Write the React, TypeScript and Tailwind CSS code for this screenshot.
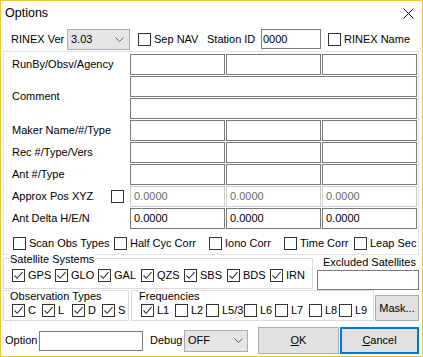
import React from "react";

const font = { fontFamily: '"Liberation Sans", Arial, sans-serif' };

function Check({ label, checked = false, className = "" }: { label: string; checked?: boolean; className?: string }) {
  return (
    <div className={`flex items-center h-[13px] shrink-0 ${className}`}>
      <div className="w-[13px] h-[13px] border border-[#333333] bg-white shrink-0 flex items-center justify-center">
        {checked && (
          <svg width="11" height="11" viewBox="0 0 11 11">
            <path d="M1.5 5.5 L4.2 8.3 L9.5 2.2" fill="none" stroke="#333333" strokeWidth="1.1" />
          </svg>
        )}
      </div>
      {label && <span className="ml-[3px] text-[11px] leading-[13px] whitespace-nowrap">{label}</span>}
    </div>
  );
}

function Box({ w, value = "", disabled = false }: { w: string; value?: string; disabled?: boolean }) {
  return (
    <div
      className={`${w} h-[21px] shrink-0 border bg-white flex items-center pl-[3px] text-[11px] ${
        disabled ? "border-[#cccccc] text-[#6d6d6d]" : "border-[#7a7a7a] text-black"
      }`}
    >
      {value}
    </div>
  );
}

function Chevron() {
  return (
    <svg width="9" height="5" viewBox="0 0 9 5">
      <path d="M0.5 0.5 L4.5 4.5 L8.5 0.5" fill="none" stroke="#606060" strokeWidth="1" />
    </svg>
  );
}

function Row({ label, children }: { label: React.ReactNode; children: React.ReactNode }) {
  return (
    <div className="flex h-[21px]">
      <div className="w-[118px] shrink-0 flex items-center text-[11px]">{label}</div>
      <div className="flex gap-[1px]">{children}</div>
    </div>
  );
}

export default function App() {
  return (
    <div className="w-[423px] h-[357px] border border-[#ecc834] bg-white text-black overflow-hidden" style={font}>
      {/* title bar */}
      <div className="h-[27px] flex items-center justify-between pl-[4px] pr-[8px]">
        <span className="text-[12.5px] mt-[-2px]">Options</span>
        <svg width="11" height="11" viewBox="0 0 11 11" className="mt-[-3px]">
          <path d="M0.5 0.5 L10.5 10.5 M10.5 0.5 L0.5 10.5" stroke="#111111" strokeWidth="1" />
        </svg>
      </div>

      {/* row 1 */}
      <div className="h-[22px] flex items-center">
        <span className="ml-[10px] w-[56px] text-[11px] whitespace-nowrap">RINEX Ver</span>
        <div className="w-[63px] h-[21px] bg-[#e5e5e5] border border-[#adadad] flex items-center justify-between pl-[3px] pr-[5px] text-[11px]">
          <span>3.03</span>
          <Chevron />
        </div>
        <Check label="Sep NAV" className="ml-[8px] w-[69px]" />
        <span className="w-[54px] text-[11px] whitespace-nowrap">Station ID</span>
        <div className="w-[60px] h-[20px] border border-[#7a7a7a] flex items-center pl-[1px] text-[11px]">0000</div>
        <Check label="RINEX Name" className="ml-[7px]" />
      </div>

      {/* main panel */}
      <div className="ml-[2px] mt-[1px] w-[416px] border border-[#e3e3e3] pt-[2px] pl-[8px] pb-[4px]">
        <div className="flex flex-col gap-[1px]">
          <Row label="RunBy/Obsv/Agency">
            <Box w="w-[95px]" />
            <Box w="w-[95px]" />
            <Box w="w-[95px]" />
          </Row>
          <div className="flex">
            <div className="w-[118px] shrink-0 flex items-center text-[11px] pb-[3px]">Comment</div>
            <div className="flex flex-col gap-[1px]">
              <Box w="w-[287px]" />
              <Box w="w-[287px]" />
            </div>
          </div>
          <Row label="Maker Name/#/Type">
            <Box w="w-[95px]" />
            <Box w="w-[95px]" />
            <Box w="w-[95px]" />
          </Row>
          <Row label="Rec #/Type/Vers">
            <Box w="w-[95px]" />
            <Box w="w-[95px]" />
            <Box w="w-[95px]" />
          </Row>
          <Row label="Ant #/Type">
            <Box w="w-[95px]" />
            <Box w="w-[95px]" />
            <Box w="w-[95px]" />
          </Row>
          <Row
            label={
              <div className="flex w-full items-center justify-between pr-[6px]">
                <span>Approx Pos XYZ</span>
                <Check label="" />
              </div>
            }
          >
            <Box w="w-[95px]" value="0.0000" disabled />
            <Box w="w-[95px]" value="0.0000" disabled />
            <Box w="w-[95px]" value="0.0000" disabled />
          </Row>
          <Row label="Ant Delta H/E/N">
            <Box w="w-[95px]" value="0.0000" />
            <Box w="w-[95px]" value="0.0000" />
            <Box w="w-[95px]" value="0.0000" />
          </Row>
        </div>
        <div className="flex mt-[8px] pl-[1px]">
          <Check label="Scan Obs Types" className="w-[101px]" />
          <Check label="Half Cyc Corr" className="w-[95px]" />
          <Check label="Iono Corr" className="w-[75px]" />
          <Check label="Time Corr" className="w-[70px]" />
          <Check label="Leap Sec" />
        </div>
      </div>

      {/* satellite systems row */}
      <div className="flex h-[32px] mt-[3px]">
        <div className="relative ml-[2px] w-[310px] h-[31px] border border-[#dcdcdc] pl-[8px] pt-[10px]">
          <span className="absolute left-[5px] top-[-6px] bg-white px-[1px] text-[11px] leading-[12px]">Satellite Systems</span>
          <div className="flex">
            {["GPS", "GLO", "GAL", "QZS", "SBS", "BDS", "IRN"].map((s) => (
              <Check key={s} label={s} checked className="w-[43px]" />
            ))}
          </div>
        </div>
        <div className="ml-[4px] w-[102px] flex flex-col">
          <span className="h-[12px] mt-[-2px] text-[11px] leading-[12px] text-center pl-[3px] whitespace-nowrap">Excluded Satellites</span>
          <div className="mt-[2px] w-[102px] h-[20px] border border-[#7a7a7a]" />
        </div>
      </div>

      {/* obs types / frequencies row */}
      <div className="flex h-[31px] items-end">
        <div className="relative ml-[2px] w-[126px] h-[31px] border border-[#dcdcdc] pl-[8px] pt-[13px]">
          <span className="absolute left-[5px] top-[-1px] bg-white px-[1px] text-[11px] leading-[12px]">Observation Types</span>
          <div className="flex">
            {["C", "L", "D", "S"].map((s) => (
              <Check key={s} label={s} checked className="w-[30px]" />
            ))}
          </div>
        </div>
        <div className="relative ml-[2px] w-[243px] h-[31px] border border-[#dcdcdc] pl-[9px] pt-[13px]">
          <span className="absolute left-[6px] top-[-1px] bg-white px-[1px] text-[11px] leading-[12px]">Frequencies</span>
          <div className="flex">
            <Check label="L1" checked className="w-[34px]" />
            <Check label="L2" className="w-[31px]" />
            <Check label="L5/3" className="w-[38px]" />
            <Check label="L6" className="w-[31px]" />
            <Check label="L7" className="w-[34px]" />
            <Check label="L8" className="w-[30px]" />
            <Check label="L9" />
          </div>
        </div>
        <div className="ml-[1px] w-[44px] h-[26px] bg-[#e1e1e1] border border-[#adadad] flex items-center justify-center text-[11px]">
          Mask...
        </div>
      </div>

      {/* bottom row */}
      <div className="flex items-center h-[27px] mt-[6px]">
        <span className="ml-[4px] w-[34px] text-[11px]">Option</span>
        <div className="w-[104px] h-[20px] border border-[#7a7a7a]" />
        <span className="ml-[7px] w-[34px] text-[11px]">Debug</span>
        <div className="w-[64px] h-[22px] bg-[#e5e5e5] border border-[#adadad] flex items-center justify-between pl-[3px] pr-[4px] text-[11px]">
          <span>OFF</span>
          <Chevron />
        </div>
        <div className="ml-[10px] w-[81px] h-[27px] bg-[#e1e1e1] border border-[#adadad] flex items-center justify-center text-[11px]">
          <span>
            <span className="underline">O</span>K
          </span>
        </div>
        <div className="ml-[1px] w-[79px] h-[27px] bg-[#e1e1e1] border-2 border-[#0078d7] flex items-center justify-center text-[11px]">
          <span>
            <span className="underline">C</span>ancel
          </span>
        </div>
      </div>
    </div>
  );
}
